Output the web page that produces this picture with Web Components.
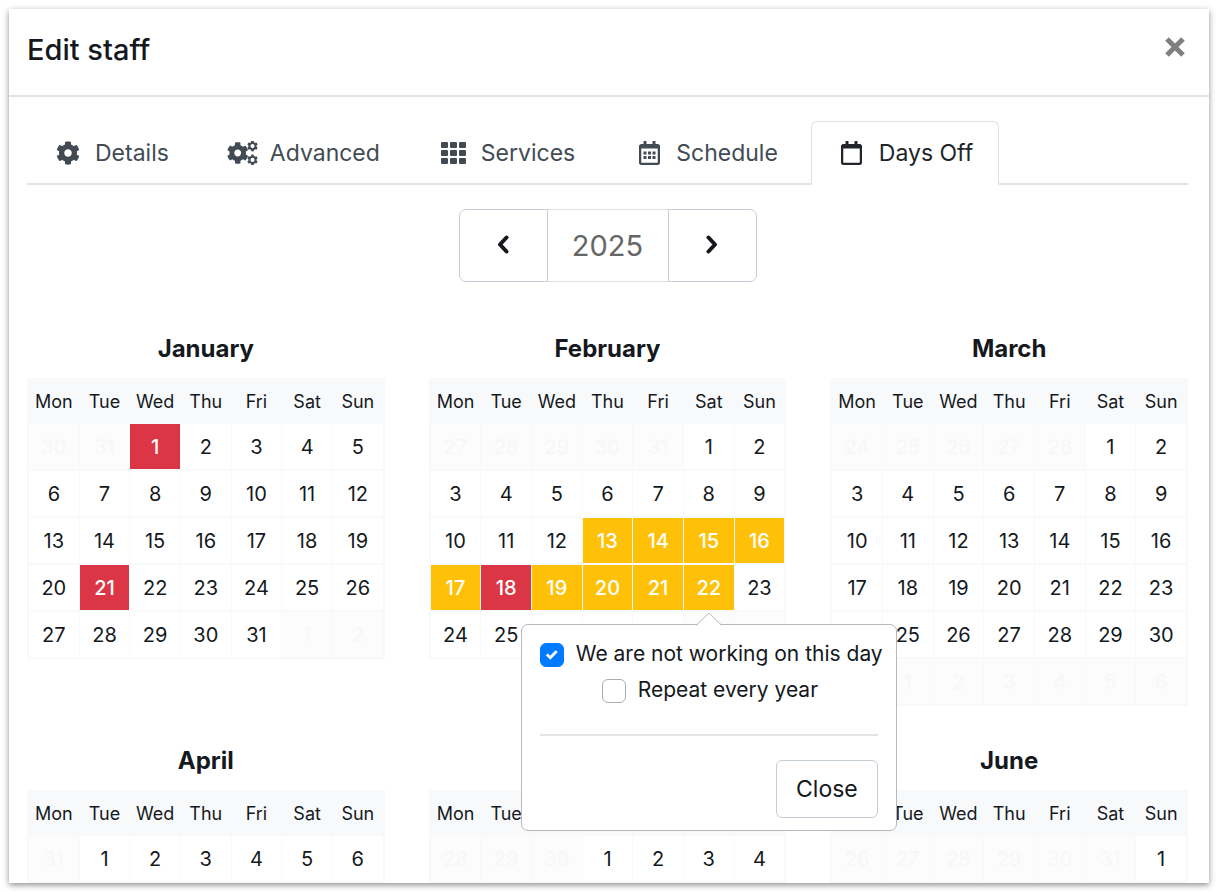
<!DOCTYPE html>
<html lang="en">
<head>
<meta charset="utf-8">
<meta name="viewport" content="width=device-width, initial-scale=1">
<title>Edit staff</title>
<style>
	body {
		margin: 0;
		background: #fff;
		color: #15191d;
		font-family: Inter, "Liberation Sans", sans-serif;
	}
</style>
</head>
<body>

<staff-dialog heading="Edit staff">
	<tab-bar slot="tabs">
		<tab-item icon="cog">Details</tab-item>
		<tab-item icon="cogs">Advanced</tab-item>
		<tab-item icon="grid">Services</tab-item>
		<tab-item icon="calendar-dots">Schedule</tab-item>
		<tab-item icon="calendar" active>Days Off</tab-item>
	</tab-bar>
	<year-picker year="2025"></year-picker>
	<month-grid>
		<month-calendar year="2025" month="1" repeated="1 21"></month-calendar>
		<month-calendar year="2025" month="2" repeated="18" off="13 14 15 16 17 19 20 21 22" open="22"></month-calendar>
		<month-calendar year="2025" month="3"></month-calendar>
		<month-calendar year="2025" month="4" weeks="1"></month-calendar>
		<month-calendar year="2025" month="5" weeks="1"></month-calendar>
		<month-calendar year="2025" month="6" weeks="1"></month-calendar>
	</month-grid>
</staff-dialog>

<script>
const COG = 'M487.4 315.7l-42.6-24.6c4.3-23.2 4.3-47 0-70.2l42.6-24.6c4.9-2.8 7.1-8.6 5.5-14-11.1-35.6-30-67.8-54.7-94.6-3.8-4.1-10-5.1-14.8-2.3L380.8 110c-17.9-15.4-38.5-27.3-60.8-35.1V25.8c0-5.6-3.9-10.5-9.4-11.7-36.7-8.2-74.3-7.8-109.2 0-5.5 1.2-9.4 6.1-9.4 11.7V75c-22.2 7.9-42.8 19.8-60.8 35.1L88.7 85.5c-4.9-2.8-11-1.9-14.8 2.3-24.7 26.7-43.6 58.9-54.7 94.6-1.7 5.4.6 11.2 5.5 14L67.3 221c-4.3 23.2-4.3 47 0 70.2l-42.6 24.6c-4.9 2.8-7.1 8.6-5.5 14 11.1 35.6 30 67.8 54.7 94.6 3.8 4.1 10 5.1 14.8 2.3l42.6-24.6c17.9 15.4 38.5 27.3 60.8 35.1v49.2c0 5.6 3.9 10.5 9.4 11.7 36.7 8.2 74.3 7.8 109.2 0 5.5-1.2 9.4-6.1 9.4-11.7v-49.2c22.2-7.9 42.8-19.8 60.8-35.1l42.6 24.6c4.9 2.8 11 1.9 14.8-2.3 24.7-26.7 43.6-58.9 54.7-94.6 1.5-5.5-.7-11.3-5.6-14.1z';
const HOLE = 'M256 336c-44.1 0-80-35.9-80-80s35.9-80 80-80 80 35.9 80 80-35.9 80-80 80z';
const BIG_HOLE = 'M256 351a95 95 0 1 1 0-190 95 95 0 0 1 0 190z';
const CALENDAR = 'M400 64h-48V12c0-6.6-5.4-12-12-12h-40c-6.6 0-12 5.4-12 12v52H160V12c0-6.6-5.4-12-12-12h-40c-6.6 0-12 5.4-12 12v52H48C21.5 64 0 85.5 0 112v352c0 26.5 21.5 48 48 48h352c26.5 0 48-21.5 48-48V112c0-26.5-21.5-48-48-48zm-6 400H54c-3.3 0-6-2.7-6-6V160h352v298c0 3.3-2.7 6-6 6z';
const DOTS = 'M96 224h64v64H96zM192 224h64v64h-64zM288 224h64v64h-64zM96 320h64v64H96zM192 320h64v64h-64zM288 320h64v64h-64z';

// name: [viewBox, width, height, markup]
const ICONS = {
	'cog': ['0 0 512 512', 24, 24, `<path fill-rule="evenodd" d="${COG}${HOLE}"/>`],
	'cogs': ['0 0 32 24', 32, 24, `
		<g fill-rule="evenodd">
			<path transform="translate(-.3 1) scale(.043)" d="${COG}${HOLE}"/>
			<path transform="translate(20 -.4) scale(.0215)" d="${COG}${BIG_HOLE}"/>
			<path transform="translate(20 13.4) scale(.0215)" d="${COG}${BIG_HOLE}"/>
		</g>`],
	'grid': ['0 0 25 22', 25, 22, [0, 8, 16].map(y => [0, 9, 18].map(x =>
		`<rect x="${x}" y="${y}" width="7" height="6" rx="1"/>`).join('')).join('')],
	'calendar': ['0 0 448 512', 21, 24, `<path d="${CALENDAR}"/>`],
	'calendar-dots': ['0 0 448 512', 21, 24, `<path d="${CALENDAR}${DOTS}"/>`],
	'left': ['0 0 14 20', 14, 20, '<path d="M10.500 3.500L4 10.500l6.500 7" fill="none" stroke="currentColor" stroke-width="4" stroke-linecap="round" stroke-linejoin="round"/>'],
	'right': ['0 0 14 20', 14, 20, '<path d="M3.500 3.500L10 10.500l-6.500 7" fill="none" stroke="currentColor" stroke-width="4" stroke-linecap="round" stroke-linejoin="round"/>'],
	'times': ['0 0 20 20', 20, 20, '<path d="M2 2l16 16M18 2L2 18" fill="none" stroke="currentColor" stroke-width="5"/>']
};

class UiIcon extends HTMLElement {
	constructor () {
		super();
		this.attachShadow({ mode: 'open' });
	}

	connectedCallback () {
		const [box, width, height, body] = ICONS[this.getAttribute('name')];
		this.shadowRoot.innerHTML = `
		<style>
			:host { display: inline-flex; align-items: center; justify-content: center; }
			svg { display: block; fill: currentColor; flex: none; }
		</style>
		<svg viewBox="${box}" width="${width}" height="${height}" aria-hidden="true">${body}</svg>`;
	}
}

class StaffDialog extends HTMLElement {
	constructor () {
		super();
		this.attachShadow({ mode: 'open' });
		this.shadowRoot.innerHTML = `
		<style>
			:host {
				display: flex;
				flex-direction: column;
				box-sizing: border-box;
				height: calc(100vh - 18px);
				margin: 9px;
				overflow: hidden;
				background: #fff;
				box-shadow: 0 2px 6px rgba(0, 0, 0, .45);
			}
			header {
				display: flex;
				align-items: center;
				justify-content: space-between;
				flex: none;
				height: 86px;
				padding: 0 24px 0 18px;
				border-bottom: 2px solid #e1e5ea;
			}
			h1 { margin: 0 0 4px; font-size: 29px; line-height: 40px; font-weight: 500; }
			button {
				margin: 0 0 8px;
				padding: 0;
				border: 0;
				background: none;
				color: #7f7f7f;
			}
			main {
				display: flex;
				flex-direction: column;
				flex: 1;
				min-height: 0;
				padding: 24px 21px 0 18px;
				overflow: hidden;
			}
		</style>
		<header>
			<h1>${this.getAttribute('heading')}</h1>
			<button type="button" aria-label="Close dialog"><ui-icon name="times"></ui-icon></button>
		</header>
		<main>
			<slot name="tabs"></slot>
			<slot></slot>
		</main>`;
	}
}

class TabBar extends HTMLElement {
	constructor () {
		super();
		this.attachShadow({ mode: 'open' });
		this.shadowRoot.innerHTML = `
		<style>
			:host { display: block; flex: none; }
			nav { display: flex; gap: 7px; border-bottom: 2px solid #e1e5ea; }
		</style>
		<nav><slot></slot></nav>`;
	}
}

class TabItem extends HTMLElement {
	constructor () {
		super();
		this.attachShadow({ mode: 'open' });
		this.shadowRoot.innerHTML = `
		<style>
			:host { display: block; color: #424b54; margin-bottom: -2px; }
			:host([active]) { color: #212529; }
			a {
				display: flex;
				align-items: center;
				gap: 12px;
				box-sizing: border-box;
				height: 64px;
				padding: 0 25px;
				border: 1px solid transparent;
				border-radius: 6px 6px 0 0;
				color: inherit;
				font-size: 23px;
				line-height: 36px;
				white-space: nowrap;
				text-decoration: none;
			}
			:host([active]) a { background: #fff; border-color: #dbe0e5; border-bottom-color: #fff; }
			ui-icon { width: 30px; }
		</style>
		<a href="#"><ui-icon name="${this.getAttribute('icon')}"></ui-icon><slot></slot></a>`;
	}
}

class YearPicker extends HTMLElement {
	constructor () {
		super();
		this.attachShadow({ mode: 'open' });
		this.shadowRoot.innerHTML = `
		<style>
			:host { display: flex; flex: none; justify-content: center; margin: 24px 0 51px; }
			button, input {
				box-sizing: border-box;
				height: 73px;
				margin: 0;
				padding: 0;
				border: 1px solid #c6ced7;
				background: #fff;
				font: inherit;
			}
			button { width: 89px; color: #15191d; }
			.prev { border-radius: 7px 0 0 7px; }
			.next { border-radius: 0 7px 7px 0; }
			input {
				width: 120px;
				border-color: #dee2e6;
				border-left: 0;
				border-right: 0;
				color: #666;
				font-size: 29px;
				text-align: center;
			}
		</style>
		<button class="prev" type="button" aria-label="Previous year"><ui-icon name="left"></ui-icon></button>
		<input type="text" aria-label="Year" value="${this.getAttribute('year')}" readonly>
		<button class="next" type="button" aria-label="Next year"><ui-icon name="right"></ui-icon></button>`;
	}
}

class MonthGrid extends HTMLElement {
	constructor () {
		super();
		this.attachShadow({ mode: 'open' });
		this.shadowRoot.innerHTML = `
		<style>
			:host {
				display: grid;
				flex: none;
				grid-template-columns: repeat(3, minmax(0, 1fr));
				gap: 39px 44px;
			}
		</style>
		<slot></slot>`;
	}
}

const MONTHS = ['January', 'February', 'March', 'April', 'May', 'June', 'July',
	'August', 'September', 'October', 'November', 'December'];
const DAYS = ['Mon', 'Tue', 'Wed', 'Thu', 'Fri', 'Sat', 'Sun'];

class MonthCalendar extends HTMLElement {
	constructor () {
		super();
		this.attachShadow({ mode: 'open' });
	}

	list (name) {
		return (this.getAttribute(name) || '').split(' ').filter(Boolean).map(Number);
	}

	rows () {
		const year     = Number(this.getAttribute('year'));
		const month    = Number(this.getAttribute('month')) - 1;
		const off      = this.list('off');
		const repeated = this.list('repeated');
		const open     = Number(this.getAttribute('open'));
		const lead     = (new Date(year, month, 1).getDay() + 6) % 7;
		const length   = new Date(year, month + 1, 0).getDate();
		const weeks    = Number(this.getAttribute('weeks')) || Math.ceil((lead + length) / 7);
		let html = '';
		for (let w = 0; w < weeks; w++) {
			html += '<tr>';
			for (let d = 0; d < 7; d++) {
				const date = new Date(year, month, 1 - lead + w * 7 + d);
				const n = date.getDate();
				if (date.getMonth() !== month) {
					html += `<td class="outside">${n}</td>`;
					continue;
				}
				const kind = repeated.includes(n) ? 'repeated' : off.includes(n) ? 'off' : '';
				const popover = n === open ? '<day-popover></day-popover>' : '';
				html += `<td class="${kind}"><button type="button">${n}</button>${popover}</td>`;
			}
			html += '</tr>';
		}
		return html;
	}

	connectedCallback () {
		this.shadowRoot.innerHTML = `
		<style>
			:host { display: block; }
			h2 { margin: 0 0 13px; font-size: 24px; line-height: 32px; font-weight: 700; text-align: center; }
			table {
				width: 100%;
				table-layout: fixed;
				border: 1px solid #f8f9fa;
				border-top: 0;
				border-bottom: 0;
				border-collapse: separate;
				border-spacing: 1px 2px;
				background: #f8f9fb;
			}
			th, td { padding: 0; text-align: center; }
			th { height: 42px; font-size: 18px; font-weight: 400; }
			td { position: relative; height: 45px; background: #fff; font-size: 20px; }
			td button {
				display: block;
				width: 100%;
				height: 45px;
				padding: 0;
				border: 0;
				background: none;
				color: inherit;
				font: inherit;
			}
			.outside { background: #fcfcfc; color: #f6f7f8; }
			.off { background: #ffc107; color: #fff; font-weight: 500; }
			.repeated { background: #dc3545; color: #fff; font-weight: 500; }
			day-popover {
				position: absolute;
				z-index: 10;
				top: calc(100% + 14px);
				left: 50%;
				transform: translateX(-50%);
			}
		</style>
		<h2>${MONTHS[this.getAttribute('month') - 1]}</h2>
		<table>
			<thead><tr>${DAYS.map(d => `<th scope="col">${d}</th>`).join('')}</tr></thead>
			<tbody>${this.rows()}</tbody>
		</table>`;
	}
}

class DayPopover extends HTMLElement {
	constructor () {
		super();
		this.attachShadow({ mode: 'open' });
		this.shadowRoot.innerHTML = `
		<style>
			:host {
				display: block;
				box-sizing: border-box;
				width: 376px;
				padding: 11px 18px 12px;
				border: 1px solid #b8b8b8;
				border-radius: 7px;
				background: #fff;
				color: #15191d;
				font-size: 21px;
				font-weight: 400;
				line-height: 36px;
				text-align: left;
				white-space: nowrap;
			}
			.arrow { position: absolute; top: -13px; left: 50%; margin-left: -13px; display: block; }
			label { display: flex; align-items: center; gap: 12px; }
			.sub { padding-left: 62px; }
			input {
				appearance: none;
				display: grid;
				place-items: center;
				flex: none;
				box-sizing: border-box;
				width: 24px;
				height: 24px;
				margin: 2px 0 0;
				border: 1px solid #a5adb5;
				border-radius: 6px;
				background: #fff;
			}
			input:checked { border-color: #007bff; background: #007bff; }
			input:checked::before {
				content: "";
				width: 12px;
				height: 10px;
				background: #fff;
				clip-path: polygon(0 52%, 16% 34%, 37% 58%, 82% 2%, 100% 20%, 38% 98%);
			}
			hr { margin: 26px 0 24px; border: 0; border-top: 2px solid #e5e5e5; }
			footer { display: flex; justify-content: flex-end; }
			button {
				box-sizing: border-box;
				height: 58px;
				padding: 0 19px;
				border: 1px solid #c6ced7;
				border-radius: 6px;
				background: #fff;
				color: inherit;
				font-family: inherit;
				font-size: 23px;
			}
		</style>
		<svg class="arrow" width="26" height="14" viewBox="0 0 26 14" aria-hidden="true">
			<path d="M0 14L13 1l13 13z" fill="#fff"/>
			<path d="M0 13.500L13 1l13 12.500" fill="none" stroke="#b8b8b8"/>
		</svg>
		<label><input type="checkbox" checked>We are not working on this day</label>
		<label class="sub"><input type="checkbox">Repeat every year</label>
		<hr>
		<footer><button type="button">Close</button></footer>`;
	}
}

customElements.define('ui-icon', UiIcon);
customElements.define('staff-dialog', StaffDialog);
customElements.define('tab-bar', TabBar);
customElements.define('tab-item', TabItem);
customElements.define('year-picker', YearPicker);
customElements.define('month-grid', MonthGrid);
customElements.define('day-popover', DayPopover);
customElements.define('month-calendar', MonthCalendar);
</script>
</body>
</html>
